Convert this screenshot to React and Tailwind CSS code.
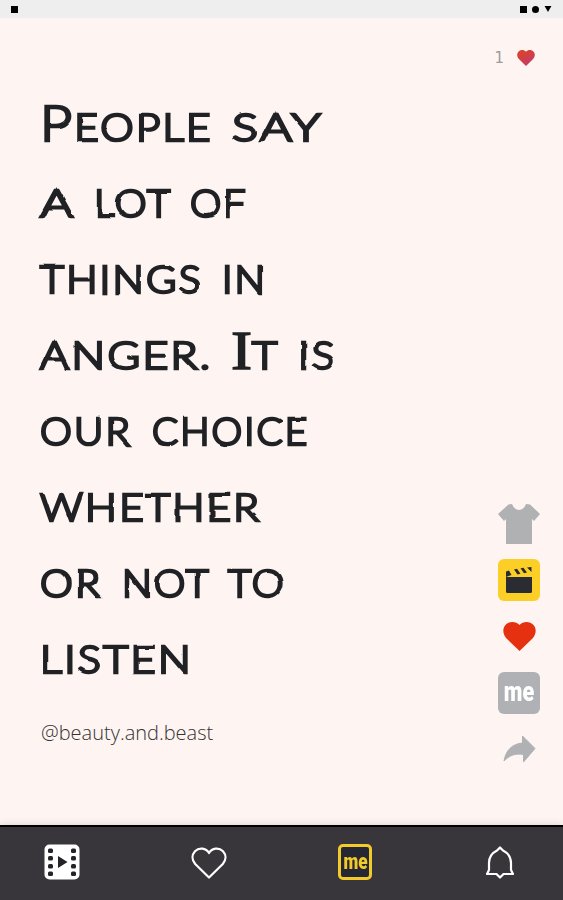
import { clsx } from "clsx";

// slot = distance to the next word, scale = how wide the letters are drawn
const quote = [
  [
    { text: "People", slot: "w-[192px]", scale: "scale-x-[1.11]", big: true },
    { text: "say", slot: "w-[90px]", scale: "scale-x-[1.28]" },
  ],
  [
    { text: "a", slot: "w-[54px]", scale: "scale-x-[1.33]" },
    { text: "lot", slot: "w-[96px]", scale: "scale-x-[1.06]" },
    { text: "of", slot: "w-[60px]", scale: "scale-x-[1.04]" },
  ],
  [
    { text: "things", slot: "w-[182px]", scale: "scale-x-[1.09]" },
    { text: "in", slot: "w-[40px]", scale: "scale-x-[1.06]" },
  ],
  [
    { text: "anger.", slot: "w-[191px]", scale: "scale-x-[1.17]" },
    { text: "It", slot: "w-[67px]", scale: "scale-x-[1.15]", serif: true },
    { text: "is", slot: "w-[40px]", scale: "scale-x-[1.14]" },
  ],
  [
    { text: "our", slot: "w-[112px]", scale: "scale-x-[1.06]" },
    { text: "choice", slot: "w-[157px]", scale: "scale-x-[1.02]" },
  ],
  [{ text: "whether", slot: "w-[222px]", scale: "scale-x-[1.11]" }],
  [
    { text: "or", slot: "w-[82px]", scale: "scale-x-[1.09]" },
    { text: "not", slot: "w-[106px]", scale: "scale-x-[1.04]" },
    { text: "to", slot: "w-[56px]", scale: "scale-x-[1.06]" },
  ],
  [{ text: "listen", slot: "w-[152px]", scale: "scale-x-[1.14]" }],
];

function Word({ word }) {
  return (
    <span className={clsx("block shrink-0", word.slot)}>
      <span
        className={clsx(
          "inline-block origin-left tracking-[2px] whitespace-pre uppercase",
          word.big && "first-letter:text-[50px] first-letter:leading-none",
          word.scale
        )}
      >
        {word.serif ? (
          <>
            <span className="font-['Liberation_Serif'] text-[55px] leading-none tracking-normal [-webkit-text-stroke:1.3px_#202125]">
              {word.text[0]}
            </span>
            {word.text.slice(1)}
          </>
        ) : (
          word.text
        )}
      </span>
    </span>
  );
}

function Heart({ className, fill = "#e5310f" }) {
  return (
    <svg viewBox="0 0 33 29" className={className} fill={fill}>
      <defs>
        <linearGradient id="likes" x1="0" y1="0" x2="0.6" y2="1">
          <stop offset="0.2" stopColor="#d9432f" />
          <stop offset="1" stopColor="#c63a66" />
        </linearGradient>
      </defs>
      <path d="M16.500 3C13-1 6-1 2.500 3 -1 7 0 12.500 3.500 16.500L16.500 29 29.500 16.500C33 12.500 34 7 30.500 3 27-1 20-1 16.500 3Z" />
    </svg>
  );
}

function StatusBar() {
  return (
    <header className="flex h-[18px] shrink-0 items-center justify-between bg-[#eeeeee] pr-[11px] pl-[11px]">
      <span className="size-[7px] bg-black" />
      <div className="flex items-center gap-[5px]">
        <span className="size-[7px] bg-black" />
        <span className="size-[7px] rounded-full bg-black" />
        <svg viewBox="0 0 8 7" className="h-[6px] w-[8px]">
          <path d="M0 0h8L4 7z" />
        </svg>
      </div>
    </header>
  );
}

function SideActions() {
  return (
    <aside className="mr-[23px] flex w-[42px] flex-col items-center">
      <svg viewBox="0 0 42 40" className="mt-[446px] h-10 w-[42px]" fill="#b0b1b3">
        <path d="M10.500 0.500 14 0C17 8 25 8 28 0L32 0.500 42 10 36 17 34 15V40H8V15L6 17 0 10Z" />
      </svg>
      <div className="mt-[15px] flex size-[42px] items-center justify-center rounded-[6px] bg-[#fccf26]">
        <svg viewBox="0 0 28 27" className="h-[27px] w-7" fill="#2b2b32">
          <path d="M1 10h26v14.500q0 1.500-1.500 1.500h-23q-1.500 0-1.500-1.500z" />
          <path d="M1 4.500 4 3.500 6.500 8 1 10zM9 2.500l3-.7 3.500 5-3 .7zM15.500 1.200l3-.5 3.500 4.800-3 .7zM22 .5l4.500-.5v5z" />
        </svg>
      </div>
      <Heart className="mt-[21px] h-[29px] w-[33px]" />
      <div className="mt-[21px] flex size-[42px] items-center justify-center rounded-[6px] bg-[#b0b1b5]">
        <span className="mb-[2px] scale-x-[0.8] font-[Roboto] text-[27px] leading-none font-black text-white">
          me
        </span>
      </div>
      <svg viewBox="0 0 33 29" className="mt-[21px] h-[29px] w-[33px]" fill="#b0b1b5">
        <path
          d="M19.500 1 32 13.500 20.500 27V19.500C11 18 6 21 1 26 3 15 9 9 19.500 8Z"
          stroke="#b0b1b5"
          strokeLinejoin="round"
        />
      </svg>
    </aside>
  );
}

function BottomNav() {
  return (
    <nav className="flex h-[75px] shrink-0 items-start border-t-2 border-black bg-[#38363b] shadow-[0_-1px_7px_rgba(0,0,0,0.12)]">
      <svg viewBox="0 0 36 36" className="mt-[17px] ml-[44px] size-9">
        <rect x="0.500" y="0.500" width="35" height="35" rx="5" fill="#fff" />
        <g fill="#242327">
          {[4.5, 12, 20, 27.5].map((y) => (
            <g key={y}>
              <rect x="4" y={y} width="5" height="4.500" rx="1.500" />
              <rect x="27" y={y} width="5" height="4.500" rx="1.500" />
            </g>
          ))}
          <path d="M14 12v12l9.500-6z" />
        </g>
      </svg>
      <svg viewBox="0 0 36 32" className="mt-[20px] ml-[111px] h-8 w-9" fill="none">
        <path
          d="M18 6C15 .8 8 .2 4 4.200 .6 8 .8 13 4.200 17L18 30.500 31.800 17C35.200 13 35.400 8 32 4.200 28 .2 21 .8 18 6Z"
          stroke="#fff"
          strokeWidth="2.200"
          strokeLinejoin="round"
        />
      </svg>
      <div className="mt-[17px] ml-[111px] flex h-[36px] w-[34px] items-center justify-center rounded-[5px] border-3 border-[#f3ca2c] bg-[#252733]">
        <span className="mb-[1px] scale-x-[0.78] font-[Roboto] text-[22px] leading-none font-black text-[#f3ca2c]">
          me
        </span>
      </div>
      <svg viewBox="0 0 28 33" className="mt-[19px] ml-[114px] h-[33px] w-7" fill="none">
        <path
          d="M14 1.500 17 4.500C22 7 25 11 25 17V24L27 28H17.500L14 31.500 10.500 28H1L3 24V17C3 11 6 7 11 4.500Z"
          stroke="#fff"
          strokeWidth="2.200"
          strokeLinejoin="round"
        />
      </svg>
    </nav>
  );
}

function App() {
  return (
    <div className="flex h-[900px] w-[563px] flex-col overflow-hidden bg-[#fef4f1]">
      {/* slight wobble for the handwritten quote */}
      <svg className="absolute size-0">
        <filter id="rough" colorInterpolationFilters="sRGB">
          <feTurbulence type="fractalNoise" baseFrequency="0.06" numOctaves="1" seed="4" />
          <feDisplacementMap in="SourceGraphic" scale="2.500" xChannelSelector="R" yChannelSelector="G" />
          <feGaussianBlur stdDeviation="0.4" />
        </filter>
      </svg>
      <StatusBar />
      <main className="flex min-h-0 flex-1 flex-col">
        <div className="flex h-[80px] shrink-0 items-center justify-end gap-[13px] pr-[28px]">
          <span className="font-['DejaVu_Sans'] text-[15px] leading-none text-[#a09b9a]">1</span>
          <Heart className="h-[16px] w-[18px]" fill="url(#likes)" />
        </div>
        <div className="-mt-[40px] flex min-h-0 flex-1 items-start justify-between">
          <section className="pt-[30px] pl-[40px]">
            <div className="font-[Lato] text-[38px] font-light text-[#202125] [-webkit-text-stroke:2.6px_#202125] [filter:url(#rough)] [stroke-linejoin:round]">
              {quote.map((line, i) => (
                <p key={i} className="flex h-[76px] items-baseline leading-[76px]">
                  {line.map((word) => (
                    <Word key={word.text} word={word} />
                  ))}
                </p>
              ))}
            </div>
            <p className="mt-[22px] pl-px font-['Open_Sans'] text-[20px] font-light text-[#333]">
              @beauty.and.beast
            </p>
          </section>
          <SideActions />
        </div>
      </main>
      <BottomNav />
    </div>
  );
}

export default App;
